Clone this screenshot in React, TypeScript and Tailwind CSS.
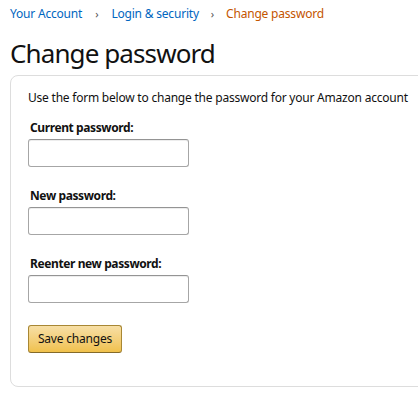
import React from "react";

const font = { fontFamily: '"Noto Sans", "Open Sans", Arial, sans-serif' };

function Field({ label, first }: { label: string; first?: boolean }) {
  return (
    <div className={first ? "mt-[11px]" : "mt-[19px]"}>
      <label className="block pl-[2px] text-[12px] leading-[19px] font-bold tracking-[-0.4px] text-[#111]">{label}</label>
      <input
        type="password"
        className="mt-[2px] block h-[28px] w-[161px] rounded-[3px] border border-[#a6a6a6] border-t-[#949494] bg-white px-[7px] shadow-[inset_0_1px_0_rgba(0,0,0,0.07)] outline-none"
      />
    </div>
  );
}

export default function App() {
  return (
    <div className="w-[418px] h-[400px] overflow-hidden bg-white text-[#111]" style={font}>
      {/* breadcrumb */}
      <nav className="flex items-center pl-[10px] pt-[4px] text-[12px] leading-[19px] tracking-[-0.2px]">
        <a className="text-[#0066c0]">Your Account</a>
        <span className="mx-[13px] text-[11px] text-[#555]">›</span>
        <a className="text-[#0066c0]">Login &amp; security</a>
        <span className="mx-[12px] text-[11px] text-[#555]">›</span>
        <span className="text-[#c45500]">Change password</span>
      </nav>

      <h1 className="mt-[12px] pl-[10px] text-[26px] leading-[36px] font-normal tracking-[-0.9px] text-[#111]">Change password</h1>

      <div className="ml-[10px] mt-[4px] w-[430px] rounded-[8px] border border-[#ddd] pl-[17px] pt-[12px] pb-[33px]">
        <p className="text-[12px] leading-[19px] tracking-[-0.22px]">Use the form below to change the password for your Amazon account</p>

        <Field label="Current password:" first />
        <Field label="New password:" />
        <Field label="Reenter new password:" />

        <button className="mt-[22px] block h-[28px] w-[94px] rounded-[3px] border border-[#a88734] border-t-[#a88734] border-b-[#846a29] bg-gradient-to-b from-[#f7dfa5] to-[#f0c14b] text-[12px] leading-[26px] tracking-[-0.2px] text-[#111]">
          Save changes
        </button>
      </div>
    </div>
  );
}
